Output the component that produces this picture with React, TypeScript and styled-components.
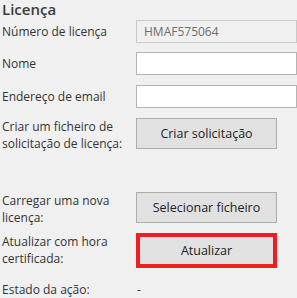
import React from 'react';
import styled, { createGlobalStyle } from 'styled-components';

const GlobalStyle = createGlobalStyle`
  html, body {
    margin: 0;
    padding: 0;
    background: #f0f0f0;
  }
  body {
    font-family: "Open Sans", "Noto Sans", sans-serif;
    color: #333333;
  }
`;

const Panel = styled.div`
  width: 297px;
  height: 298px;
  overflow: hidden;
  padding: 0 0 0 2px;
  box-sizing: border-box;
  display: flex;
  flex-direction: column;
`;

const Title = styled.h2`
  margin: 0;
  height: 20px;
  font-size: 15px;
  font-weight: 600;
  line-height: 18px;
  color: #3c3c3c;
`;

const Row = styled.div<{ $top: number; $height: number }>`
  display: grid;
  grid-template-columns: 134px 1fr;
  align-items: start;
  margin-top: ${p => p.$top}px;
  min-height: ${p => p.$height}px;
`;

const Label = styled.div<{ $pad?: number }>`
  font-size: 12px;
  line-height: 17px;
  padding-top: ${p => p.$pad ?? 0}px;
  color: #333333;
  white-space: pre-line;
`;

const Field = styled.div<{ $readOnly?: boolean }>`
  height: 23px;
  box-sizing: border-box;
  border: 1px solid ${p => (p.$readOnly ? '#c8c8c8' : '#b4b4b4')};
  background: ${p => (p.$readOnly ? '#f0f0f0' : '#ffffff')};
  font-size: 12px;
  line-height: 21px;
  padding-left: 7px;
  color: #6d6d6d;
  width: 161px;
`;

const Button = styled.div<{ $highlight?: boolean }>`
  width: 141px;
  height: ${p => (p.$highlight ? 35 : 31)}px;
  box-sizing: border-box;
  background: #e1e1e1;
  border: ${p => (p.$highlight ? '4px solid #ee1c25' : '1px solid #adadad')};
  font-size: 12.5px;
  display: flex;
  align-items: center;
  justify-content: center;
  color: #222222;
`;

const Status = styled.div`
  font-size: 12px;
  line-height: 17px;
  padding-left: 1px;
`;

export default function App() {
  return (
    <>
      <GlobalStyle />
      <Panel>
        <Title>Licença</Title>
        <Row $top={2} $height={23}>
          <Label $pad={3}>Número de licença</Label>
          <Field $readOnly>HMAF575064</Field>
        </Row>
        <Row $top={9} $height={23}>
          <Label $pad={3}>Nome</Label>
          <Field />
        </Row>
        <Row $top={10} $height={23}>
          <Label $pad={3}>Endereço de email</Label>
          <Field />
        </Row>
        <Row $top={10} $height={36}>
          <Label>{'Criar um ficheiro de\nsolicitação de licença:'}</Label>
          <Button>Criar solicitação</Button>
        </Row>
        <Row $top={38} $height={33}>
          <Label>{'Carregar uma nova\nlicença:'}</Label>
          <Button>Selecionar ficheiro</Button>
        </Row>
        <Row $top={8} $height={35}>
          <Label>{'Atualizar com hora\ncertificada:'}</Label>
          <Button $highlight>Atualizar</Button>
        </Row>
        <Row $top={13} $height={17}>
          <Label>Estado da ação:</Label>
          <Status>-</Status>
        </Row>
      </Panel>
    </>
  );
}
